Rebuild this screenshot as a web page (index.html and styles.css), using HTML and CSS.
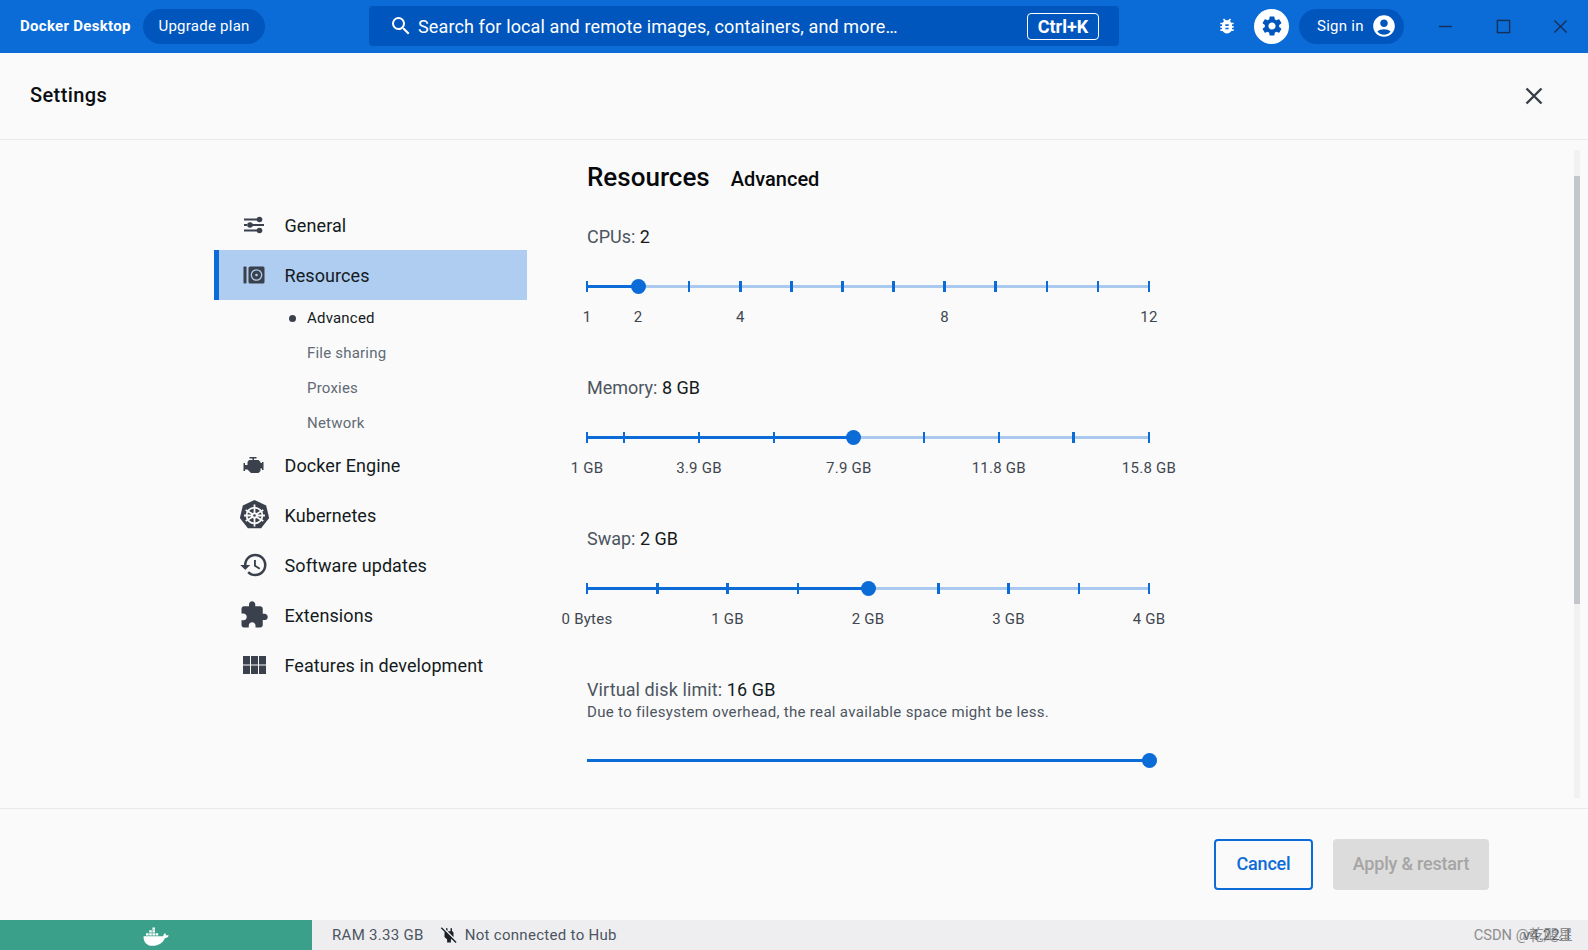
FILE: index.html
```html
<!DOCTYPE html>
<html lang="en">
<head>
<meta charset="utf-8">
<title>Docker Desktop - Settings</title>
<link rel="stylesheet" href="styles.css">
</head>
<body>
<header class="topbar">
  <span class="brand">Docker Desktop</span>
  <span class="pill upgrade">Upgrade plan</span>
  <div class="search">
    <svg class="search-icon" viewBox="0 0 24 24"><path d="M15.5 14h-.79l-.28-.27A6.47 6.47 0 0 0 16 9.5 6.5 6.5 0 1 0 9.5 16c1.61 0 3.09-.59 4.23-1.57l.27.28v.79l5 4.99L20.49 19l-4.99-5zm-6 0C7.01 14 5 11.99 5 9.5S7.01 5 9.5 5 14 7.01 14 9.5 11.99 14 9.5 14z"/></svg>
    <span class="search-text">Search for local and remote images, containers, and more…</span>
    <span class="kbd">Ctrl+K</span>
  </div>
  <svg class="bug" viewBox="0 0 24 24"><path d="M20 8h-2.81c-.45-.78-1.07-1.45-1.82-1.96L17 4.41 15.59 3l-2.17 2.17C12.96 5.06 12.49 5 12 5c-.49 0-.96.06-1.41.17L8.41 3 7 4.41l1.62 1.63C7.88 6.55 7.26 7.22 6.81 8H4v2h2.09c-.05.33-.09.66-.09 1v1H4v2h2v1c0 .34.04.67.09 1H4v2h2.81c1.04 1.79 2.97 3 5.19 3s4.15-1.21 5.19-3H20v-2h-2.09c.05-.33.09-.66.09-1v-1h2v-2h-2v-1c0-.34-.04-.67-.09-1H20V8zm-6 8h-4v-2h4v2zm0-4h-4v-2h4v2z"/></svg>
  <span class="gear-btn">
    <svg viewBox="0 0 24 24"><path d="M19.14 12.94c.04-.3.06-.61.06-.94 0-.32-.02-.64-.07-.94l2.03-1.58a.49.49 0 0 0 .12-.61l-1.92-3.32a.488.488 0 0 0-.59-.22l-2.39.96c-.5-.38-1.03-.7-1.62-.94l-.36-2.54a.484.484 0 0 0-.48-.41h-3.84c-.24 0-.43.17-.47.41l-.36 2.54c-.59.24-1.13.57-1.62.94l-2.39-.96c-.22-.08-.47 0-.59.22L2.74 8.87c-.12.21-.08.47.12.61l2.03 1.58c-.05.3-.09.63-.09.94s.02.64.07.94l-2.03 1.58a.49.49 0 0 0-.12.61l1.92 3.32c.12.22.37.29.59.22l2.39-.96c.5.38 1.03.7 1.62.94l.36 2.54c.05.24.24.41.48.41h3.84c.24 0 .44-.17.47-.41l.36-2.54c.59-.24 1.13-.56 1.62-.94l2.39.96c.22.08.47 0 .59-.22l1.92-3.32c.12-.22.07-.47-.12-.61l-2.01-1.58zM12 15.6c-1.98 0-3.6-1.62-3.6-3.6s1.62-3.6 3.6-3.6 3.6 1.62 3.6 3.6-1.62 3.6-3.6 3.6z"/></svg>
  </span>
  <span class="pill signin">Sign in
    <svg viewBox="0 0 24 24"><path d="M12 2C6.48 2 2 6.48 2 12s4.48 10 10 10 10-4.48 10-10S17.52 2 12 2zm0 4c1.93 0 3.5 1.57 3.5 3.5S13.93 13 12 13s-3.5-1.57-3.5-3.5S10.07 6 12 6zm0 14c-2.03 0-4.43-.82-6.14-2.88C7.55 15.8 9.68 15 12 15s4.45.8 6.14 2.12C16.43 19.18 14.03 20 12 20z"/></svg>
  </span>
  <div class="win-controls">
    <svg viewBox="0 0 16 16"><path d="M1 8h14"/></svg>
    <svg viewBox="0 0 16 16"><rect x="1.5" y="1.5" width="13" height="13"/></svg>
    <svg viewBox="0 0 16 16"><path d="M1.5 1.5l13 13M14.5 1.5l-13 13"/></svg>
  </div>
</header>

<div class="settings-head">
  <h1 class="settings-title">Settings</h1>
  <svg class="settings-close" viewBox="0 0 20 20"><path d="M2.5 2.5l15 15M17.5 2.5l-15 15"/></svg>
</div>

<main class="main">
  <nav class="sidebar">
    <a class="nav-row">
      <span class="nav-icon">
        <svg width="22" height="18" viewBox="0 0 22 18"><g class="stroke"><path d="M1 3.5h13M1 9h3M9 9h12M1 14.500h13"/></g><circle cx="16.500" cy="3.500" r="2.800"/><circle cx="7" cy="9" r="2.800"/><circle cx="16.500" cy="14.500" r="2.800"/></svg>
      </span>General
    </a>
    <a class="nav-row active">
      <span class="nav-icon">
        <svg width="22" height="18" viewBox="0 0 22 18"><rect x="0.500" y="0.500" width="3" height="17" rx="0.800"/><rect x="5.500" y="0.500" width="16" height="17" rx="1.500"/><circle class="ring" cx="13.500" cy="9" r="5.200"/><circle class="pin" cx="13.500" cy="9" r="1.300"/></svg>
      </span>Resources
    </a>
    <div class="subnav">
      <a class="sub-row current">Advanced</a>
      <a class="sub-row">File sharing</a>
      <a class="sub-row">Proxies</a>
      <a class="sub-row">Network</a>
    </div>
    <a class="nav-row">
      <span class="nav-icon">
        <svg width="25" height="18" viewBox="0 0 24 18"><path d="M7 1h7v1.500h-2.500V4H16l2 2v1h1.500v-1H21v8h-1.500v-1.500H18V15l-2 2H8.500L5 13.500H2.500V15H1V7h1.500v2H5V6l1.500-2h3.500V2.500H7z"/></svg>
      </span>Docker Engine
    </a>
    <a class="nav-row">
      <span class="nav-icon">
        <svg width="33" height="33" viewBox="0 0 30 30"><path d="M15 .8l10.600 5 2.700 11.500-7.300 9.300H9L1.700 17.300 4.400 5.800z"/><g class="wheel"><circle cx="15" cy="15" r="7.200"/><circle cx="15" cy="15" r="2"/><path d="M15 5v8M15 17v8M7 10l6.200 3.700M16.800 16.300L23 20M23 10l-6.200 3.700M13.200 16.300L7 20M5.500 15h7.500M17 15h7.500"/></g></svg>
      </span>Kubernetes
    </a>
    <a class="nav-row">
      <span class="nav-icon">
        <svg width="30" height="30" viewBox="0 0 24 24"><path d="M13 3a9 9 0 0 0-9 9H1l3.890 3.890.07.140L9 12H6c0-3.870 3.130-7 7-7s7 3.130 7 7-3.130 7-7 7c-1.930 0-3.680-.790-4.940-2.060l-1.420 1.420A8.954 8.954 0 0 0 13 21a9 9 0 0 0 0-18zm-1 5v5l4.280 2.540.720-1.210-3.500-2.080V8H12z"/></svg>
      </span>Software updates
    </a>
    <a class="nav-row">
      <span class="nav-icon">
        <svg width="30" height="30" viewBox="0 0 24 24"><path d="M20.500 11H19V7c0-1.100-.9-2-2-2h-4V3.500C13 2.120 11.880 1 10.500 1S8 2.120 8 3.500V5H4c-1.100 0-1.990.9-1.990 2v3.800H3.500c1.490 0 2.700 1.210 2.700 2.700s-1.210 2.700-2.700 2.700H2V20c0 1.100.9 2 2 2h3.800v-1.500c0-1.490 1.210-2.700 2.700-2.700 1.490 0 2.700 1.210 2.700 2.700V22H17c1.100 0 2-.9 2-2v-4h1.500c1.380 0 2.500-1.120 2.500-2.500S21.880 11 20.500 11z"/></svg>
      </span>Extensions
    </a>
    <a class="nav-row">
      <span class="nav-icon">
        <svg width="23" height="18" viewBox="0 0 23 18"><path d="M0 0h7v8.500H0zM8 0h7v8.500H8zM16 0h7v8.500h-7zM0 9.500h7V18H0zM8 9.500h7V18H8zM16 9.500h7V18h-7z"/></svg>
      </span>Features in development
    </a>
  </nav>

  <section class="content">
    <div class="heading">
      <h2 class="h-main">Resources</h2>
      <span class="h-sub">Advanced</span>
    </div>

    <div class="slider">
      <div class="s-label">CPUs: <b>2</b></div>
      <div class="track">
        <span class="fill" style="width:9.09%"></span>
        <i class="tick" style="left:0%"></i><i class="tick" style="left:18.18%"></i><i class="tick" style="left:27.27%"></i><i class="tick" style="left:36.36%"></i><i class="tick" style="left:45.45%"></i><i class="tick" style="left:54.55%"></i><i class="tick" style="left:63.64%"></i><i class="tick" style="left:72.73%"></i><i class="tick" style="left:81.82%"></i><i class="tick" style="left:90.91%"></i><i class="tick" style="left:100%"></i>
        <span class="thumb" style="left:9.09%"></span>
      </div>
      <div class="marks">
        <span style="left:0%">1</span><span style="left:9.09%">2</span><span style="left:27.27%">4</span><span style="left:63.64%">8</span><span style="left:100%">12</span>
      </div>
    </div>

    <div class="slider">
      <div class="s-label">Memory: <b>8 GB</b></div>
      <div class="track">
        <span class="fill" style="width:47.4%"></span>
        <i class="tick" style="left:0%"></i><i class="tick" style="left:6.6%"></i><i class="tick" style="left:19.93%"></i><i class="tick" style="left:33.27%"></i><i class="tick" style="left:59.93%"></i><i class="tick" style="left:73.27%"></i><i class="tick" style="left:86.6%"></i><i class="tick" style="left:100%"></i>
        <span class="thumb" style="left:47.4%"></span>
      </div>
      <div class="marks">
        <span style="left:0%">1 GB</span><span style="left:19.93%">3.9 GB</span><span style="left:46.6%">7.9 GB</span><span style="left:73.27%">11.8 GB</span><span style="left:100%">15.8 GB</span>
      </div>
    </div>

    <div class="slider">
      <div class="s-label">Swap: <b>2 GB</b></div>
      <div class="track">
        <span class="fill" style="width:50%"></span>
        <i class="tick" style="left:0%"></i><i class="tick" style="left:12.5%"></i><i class="tick" style="left:25%"></i><i class="tick" style="left:37.5%"></i><i class="tick" style="left:62.5%"></i><i class="tick" style="left:75%"></i><i class="tick" style="left:87.5%"></i><i class="tick" style="left:100%"></i>
        <span class="thumb" style="left:50%"></span>
      </div>
      <div class="marks">
        <span style="left:0%">0 Bytes</span><span style="left:25%">1 GB</span><span style="left:50%">2 GB</span><span style="left:75%">3 GB</span><span style="left:100%">4 GB</span>
      </div>
    </div>

    <div class="slider last">
      <div class="s-label wide">Virtual disk limit: <b>16 GB</b></div>
      <div class="s-note">Due to filesystem overhead, the real available space might be less.</div>
      <div class="track">
        <span class="fill" style="width:100%"></span>
        <span class="thumb" style="left:100%"></span>
      </div>
    </div>
  </section>

  <div class="scrollbar"><div class="scroll-thumb"></div></div>
</main>

<footer class="actions">
  <button class="btn btn-cancel">Cancel</button>
  <button class="btn btn-apply">Apply &amp; restart</button>
</footer>

<div class="statusbar">
  <div class="engine-state">
    <svg width="26" height="19" viewBox="0 0 26 19"><path d="M.6 9.200h19.500c.5-1.700 1.300-2.900 2-3.200.5 1 .9 1.700 1.100 2.500 1-.3 1.900-.2 2.500.2-.8 1.600-2.100 2.300-3.800 2.300C20.200 15.800 15.500 18.800 9.500 18.800 3.800 18.800.2 15 .6 9.200z"/><path d="M3 6.200h2.600v2.300H3zM6.200 6.200h2.600v2.300H6.200zM9.400 6.200H12v2.300H9.400zM12.600 6.200h2.600v2.300h-2.600zM6.200 3.300h2.600v2.300H6.200zM9.400 3.300H12v2.300H9.400zM9.400.4H12v2.300H9.400z"/></svg>
  </div>
  <div class="status-items">
    <span>RAM 3.33 GB</span>
    <svg class="plug" viewBox="0 0 24 24"><path d="M20.840 22.730L15.310 17.200L14.500 18V22H9.500V18L6 14.500V9C6 8.700 6.100 8.410 6.250 8.140L1.110 3L2.390 1.730L22.110 21.460L20.840 22.730M18 14.500V9C18 8 17 7 16 7V3H14V7H10.200L17.850 14.650L18 14.500M10 3H8V4.800L10 6.800V3Z"/></svg>
    <span>Not connected to Hub</span>
  </div>
  <span class="version">v4.22.1</span>
  <span class="watermark">CSDN @乾飓星</span>
</div>
</body>
</html>
```
FILE: styles.css
```css
* { box-sizing: border-box; }
html, body { height: 100%; }
body {
  margin: 0;
  height: 950px;
  overflow: hidden;
  display: flex;
  flex-direction: column;
  background: #fafafa;
  color: #0d1014;
  font-family: Roboto, "Noto Sans CJK SC", sans-serif;
}

/* top bar */
.topbar {
  height: 53px;
  flex: none;
  display: flex;
  align-items: center;
  background: #0b6cd8;
  color: #fff;
  padding: 0 0 1px 20px;
}
.brand { font-size: 15px; font-weight: 700; letter-spacing: .3px; width: 123px; flex: none; }
.pill {
  display: flex;
  align-items: center;
  height: 35px;
  border-radius: 18px;
  background: #0056bd;
  font-size: 15px;
  letter-spacing: .25px;
  flex: none;
}
.upgrade { width: 122px; justify-content: center; }
.search {
  margin-left: 104px;
  width: 750px;
  height: 40px;
  flex: none;
  display: flex;
  align-items: center;
  background: #0056bd;
  border-radius: 4px;
  padding-left: 20px;
}
.search-icon { width: 24px; height: 24px; fill: #fff; flex: none; }
.search-text { margin-left: 5px; font-size: 18px; letter-spacing: .12px; flex: 1; white-space: nowrap; }
.kbd {
  width: 72px;
  height: 27px;
  margin-right: 20px;
  flex: none;
  display: flex;
  align-items: center;
  justify-content: center;
  border: 1px solid #fff;
  border-radius: 4px;
  font-size: 18px;
  font-weight: 700;
}
.bug { width: 20px; height: 20px; fill: #fff; margin-left: 98px; flex: none; }
.gear-btn {
  width: 35px;
  height: 35px;
  margin-left: 17px;
  border-radius: 50%;
  background: #fff;
  display: flex;
  align-items: center;
  justify-content: center;
  flex: none;
}
.gear-btn svg { width: 24px; height: 24px; fill: #0056bd; }
.signin { margin-left: 10px; width: 105px; padding-left: 18px; }
.signin svg { width: 26px; height: 26px; fill: #fff; margin-left: 7px; }
.win-controls { margin-left: 34px; display: flex; gap: 42.5px; flex: none; }
.win-controls svg { width: 15px; height: 15px; fill: none; stroke: #143056; stroke-width: 1.500; }

/* settings header */
.settings-head {
  height: 87px;
  flex: none;
  display: flex;
  align-items: center;
  justify-content: space-between;
  padding: 0 44px 0 30px;
  border-bottom: 1px solid #e9e9e9;
}
.settings-title { margin: 0 0 2px; font-size: 20px; font-weight: 500; letter-spacing: .4px; color: #0b0e12; }
.settings-close { width: 20px; height: 20px; fill: none; stroke: #383e46; stroke-width: 2.400; }

/* main region */
.main { flex: 1; min-height: 0; display: flex; overflow: hidden; }

.sidebar { width: 313px; margin-left: 214px; padding-top: 60px; flex: none; }
.nav-row {
  height: 50px;
  display: flex;
  align-items: center;
  font-size: 18px;
  letter-spacing: .09px;
  color: #141a21;
}
.nav-row.active { background: #aecdf1; border-left: 5px solid #0b6cd8; }
.nav-icon {
  width: 40px;
  margin-left: 20px;
  margin-right: 10.500px;
  display: flex;
  justify-content: center;
  flex: none;
}
.nav-row.active .nav-icon { margin-left: 15px; }
.nav-icon svg { fill: #3a414c; }
.stroke { fill: none; stroke: #3a414c; stroke-width: 1.800; }
.ring { fill: none; stroke: #aecdf1; stroke-width: 1.300; }
.pin { fill: #aecdf1; }
.wheel { fill: none; stroke: #fafafa; stroke-width: 1.600; }

.subnav { height: 140px; padding-left: 93px; }
.sub-row {
  height: 35px;
  display: flex;
  align-items: center;
  font-size: 15px;
  letter-spacing: .2px;
  color: #616a75;
  position: relative;
}
.sub-row.current { color: #141a21; }
.sub-row.current::before {
  content: "";
  position: absolute;
  left: -18px;
  top: 15px;
  width: 7px;
  height: 7px;
  border-radius: 50%;
  background: #3a414c;
}

/* content */
.content { width: 1047px; padding: 19px 0 0 60px; flex: none; }
.heading { display: flex; align-items: baseline; gap: 21px; height: 36px; margin-bottom: 30px; line-height: 36px; }
.h-main { margin: 0; font-size: 26px; font-weight: 500; color: #07090c; }
.h-sub { font-size: 20px; font-weight: 500; color: #07090c; }

.slider { width: 562px; margin-bottom: 49px; }
.slider.last { margin-bottom: 0; }
.s-label { height: 24px; line-height: 24px; font-size: 18px; color: #4c5560; white-space: nowrap; }
.s-label.wide { letter-spacing: .1px; }
.s-label b { font-weight: 400; color: #141a21; }
.s-note { height: 20px; line-height: 20px; font-size: 15px; letter-spacing: .32px; color: #4c5560; white-space: nowrap; }
.track {
  position: relative;
  height: 3px;
  margin-top: 36px;
  background: #a9c9ef;
}
.s-note + .track { margin-top: 37px; }
.fill { position: absolute; left: 0; top: 0; height: 3px; background: #0b6cd8; }
.tick { position: absolute; top: -4px; width: 2.500px; height: 11px; margin-left: -1.250px; background: #0b6cd8; }
.thumb {
  position: absolute;
  top: -6px;
  width: 15px;
  height: 15px;
  margin-left: -7.500px;
  border-radius: 50%;
  background: #0b6cd8;
}
.marks { position: relative; height: 20px; margin-top: 19px; }
.marks span {
  position: absolute;
  top: 0;
  transform: translateX(-50%);
  line-height: 20px;
  font-size: 15px;
  letter-spacing: .25px;
  color: #3f4750;
  white-space: nowrap;
}

/* scrollbar */
.scrollbar { width: 6px; margin: 10px 0 10px 0; background: #f1f1f1; flex: none; }
.scroll-thumb { width: 6px; height: 428px; margin-top: 26px; background: #c3c7cb; }

/* footer */
.actions {
  height: 112px;
  flex: none;
  display: flex;
  align-items: center;
  justify-content: flex-end;
  gap: 20px;
  padding-right: 99px;
  border-top: 1px solid #e9e9e9;
}
.btn { height: 51px; padding: 0 0 2px; border-radius: 4px; font-family: inherit; font-size: 18px; font-weight: 500; letter-spacing: -.2px; }
.btn-cancel { width: 99px; background: transparent; border: 2px solid #0b6cd8; color: #0b6cd8; }
.btn-apply { width: 156px; background: #dcdcdc; border: 0; color: #a5a5a5; }

/* status bar */
.statusbar {
  height: 30px;
  flex: none;
  display: flex;
  align-items: center;
  background: #eeeef0;
  position: relative;
  font-size: 15px;
  letter-spacing: .3px;
  color: #4c5560;
}
.engine-state {
  width: 312px;
  height: 30px;
  flex: none;
  display: flex;
  align-items: center;
  justify-content: center;
  background: #3ba08a;
}
.engine-state svg { fill: #fff; margin-top: 2px; }
.status-items { display: flex; align-items: center; margin-left: 20px; }
.plug { width: 18px; height: 18px; fill: #1c2026; margin: 0 7px 0 16px; }
.version { position: absolute; right: 16px; top: 6px; letter-spacing: 0; }
.watermark { position: absolute; right: 15px; top: 3px; color: #8d8d8d; font-size: 14.700px; letter-spacing: 0; }
```
